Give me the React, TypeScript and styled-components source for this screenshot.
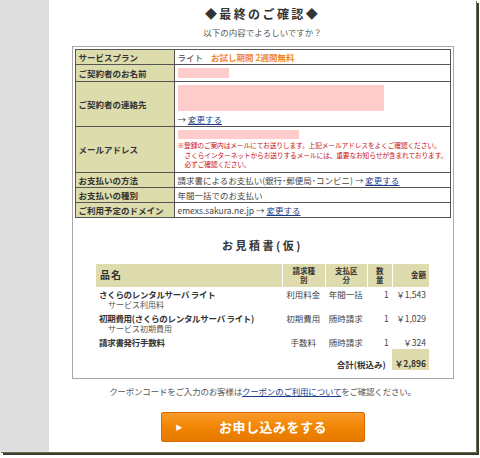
import React from "react";
import styled, { createGlobalStyle } from "styled-components";

const GlobalStyle = createGlobalStyle`
  html, body {
    margin: 0;
    background: #fff;
    font-family: "Noto Sans CJK JP", "Liberation Sans", sans-serif;
  }
`;

const Page = styled.div`
  width: 480px;
  height: 458px;
  background: #fff;
`;

const Frame = styled.div`
  width: 476px;
  height: 452px;
  display: flex;
  box-shadow: 1px 1px 0 #6a6a55, 3px 3px 0 #3a3c2c;
`;

const Gutter = styled.div`
  width: 49px;
  flex-shrink: 0;
  background: #dedede;
`;

const Main = styled.main`
  flex: 1;
  display: flex;
  flex-direction: column;
  align-items: center;
  padding-top: 6px;
  color: #333;
  background: #fff;
`;

const Title = styled.h1`
  margin: 0;
  font-size: 12px;
  line-height: 16px;
  font-weight: bold;
  letter-spacing: 2.4px;
  color: #333;
`;

const Lead = styled.p`
  margin: 4px 0 0;
  font-size: 8.5px;
  line-height: 12px;
  color: #555;
`;

const Box = styled.section`
  margin-top: 8px;
  width: 376px;
  border: 1px solid #a8a8a8;
  padding: 2px 2px 8px;
`;

const ConfirmTable = styled.table`
  width: 100%;
  table-layout: fixed;
  border-collapse: collapse;
  font-size: 8.5px;
  line-height: 12px;
`;

const Label = styled.th`
  background: #dcdcac;
  border: 1px solid #555;
  padding: 1px 3px;
  text-align: left;
  font-weight: bold;
  color: #333;
  white-space: nowrap;
`;

const Value = styled.td`
  border: 1px solid #555;
  padding: 1px 3px;
  color: #444;
  vertical-align: middle;
  overflow: hidden;
`;

const Trial = styled.span`
  margin-left: 8px;
  color: #f0892a;
  font-weight: bold;
`;

const Masked = styled.div<{ $w: number; $h: number }>`
  width: ${(p) => p.$w}px;
  height: ${(p) => p.$h}px;
  background: #ffcccc;
  margin: 2px 0;
`;

const Change = styled.a`
  color: #1d3c8c;
  text-decoration: underline;
  cursor: pointer;
`;

const Note = styled.p`
  margin: 2px 0 1px;
  color: #c8141e;
  font-size: 6.8px;
  line-height: 9.5px;
  white-space: nowrap;
  letter-spacing: -0.2px;
`;

const NoteIndent = styled.span`
  padding-left: 7px;
`;

const EstimateTitle = styled.h2`
  margin: 20px 0 0;
  text-align: center;
  font-size: 11px;
  line-height: 14px;
  font-weight: bold;
  letter-spacing: 2.5px;
  color: #333;
`;

const EstimateTable = styled.table`
  width: 333px;
  margin: 12px auto 0;
  border-collapse: separate;
  border-spacing: 0;
  font-size: 8.5px;
  line-height: 11px;
  color: #444;
`;

const Head = styled.th<{ $align?: string; $w?: number }>`
  background: #dedcae;
  height: 23px;
  padding: 0 3px;
  border-left: 1px solid #fff;
  font-weight: bold;
  font-size: 7.5px;
  line-height: 9.5px;
  color: #333;
  text-align: ${(p) => p.$align || "center"};
  width: ${(p) => (p.$w ? `${p.$w}px` : "auto")};
  &:first-child {
    border-left: none;
    font-size: 10px;
    padding-left: 4px;
    letter-spacing: 1px;
  }
`;

const Cell = styled.td<{ $align?: string }>`
  padding: 2px 3px 1px;
  text-align: ${(p) => p.$align || "left"};
  vertical-align: top;
  white-space: nowrap;
`;

const ItemName = styled.div`
  font-weight: bold;
  color: #333;
  letter-spacing: -0.3px;
`;

const ItemSub = styled.div`
  padding-left: 9px;
  font-size: 8px;
  line-height: 10px;
  color: #555;
`;

const TotalLabel = styled.td`
  padding: 10px 6px 0 0;
  text-align: right;
  font-weight: bold;
  color: #333;
`;

const TotalValue = styled.td`
  padding: 1px 3px;
  text-align: right;
  font-weight: bold;
  background: #dedcae;
  color: #333;
  vertical-align: bottom;
`;

const Coupon = styled.p`
  margin: 6px 0 0;
  font-size: 8.5px;
  line-height: 12px;
  color: #555;
  letter-spacing: -0.2px;
`;

const SubmitButton = styled.button`
  margin-top: 15px;
  width: 204px;
  height: 30px;
  display: flex;
  align-items: center;
  padding: 0 0 0 14px;
  border: 1px solid #d66c00;
  border-radius: 2px;
  background: linear-gradient(#fa9b2c, #f08300 55%, #e67a00);
  color: #fff;
  font-family: inherit;
  font-size: 13px;
  font-weight: bold;
  letter-spacing: 0.5px;
  cursor: pointer;
`;

const Arrow = styled.span`
  font-size: 7px;
  margin-right: 36px;
`;

type Item = {
  name: string;
  sub?: string;
  kind: string;
  pay: string;
  qty: string;
  price: string;
};

const items: Item[] = [
  {
    name: "さくらのレンタルサーバ ライト",
    sub: "サービス利用料",
    kind: "利用料金",
    pay: "年間一括",
    qty: "1",
    price: "￥1,543",
  },
  {
    name: "初期費用(さくらのレンタルサーバ ライト)",
    sub: "サービス初期費用",
    kind: "初期費用",
    pay: "随時請求",
    qty: "1",
    price: "￥1,029",
  },
  {
    name: "請求書発行手数料",
    kind: "手数料",
    pay: "随時請求",
    qty: "1",
    price: "￥324",
  },
];

export default function App() {
  return (
    <>
      <GlobalStyle />
      <Page>
        <Frame>
          <Gutter />
          <Main>
            <Title>◆最終のご確認◆</Title>
            <Lead>以下の内容でよろしいですか？</Lead>
            <Box>
              <ConfirmTable>
                <colgroup>
                  <col style={{ width: 99 }} />
                  <col />
                </colgroup>
                <tbody>
                  <tr>
                    <Label>サービスプラン</Label>
                    <Value>
                      ライト<Trial>お試し期間 2週間無料</Trial>
                    </Value>
                  </tr>
                  <tr>
                    <Label>ご契約者のお名前</Label>
                    <Value>
                      <Masked $w={51} $h={10} />
                    </Value>
                  </tr>
                  <tr>
                    <Label>ご契約者の連絡先</Label>
                    <Value>
                      <Masked $w={206} $h={26} />
                      → <Change>変更する</Change>
                    </Value>
                  </tr>
                  <tr>
                    <Label>メールアドレス</Label>
                    <Value>
                      <Masked $w={121} $h={9} />
                      <Note>
                        ※登録のご案内はメールにてお送りします。上記メールアドレスをよくご確認ください。
                        <br />
                        <NoteIndent>
                          さくらインターネットからお送りするメールには、重要なお知らせが含まれております。
                        </NoteIndent>
                        <br />
                        <NoteIndent>必ずご確認ください。</NoteIndent>
                      </Note>
                    </Value>
                  </tr>
                  <tr>
                    <Label>お支払いの方法</Label>
                    <Value>
                      請求書によるお支払い(銀行･郵便局･コンビニ) → <Change>変更する</Change>
                    </Value>
                  </tr>
                  <tr>
                    <Label>お支払いの種別</Label>
                    <Value>年間一括でのお支払い</Value>
                  </tr>
                  <tr>
                    <Label>ご利用予定のドメイン</Label>
                    <Value>
                      emexs.sakura.ne.jp → <Change>変更する</Change>
                    </Value>
                  </tr>
                </tbody>
              </ConfirmTable>

              <EstimateTitle>お見積書(仮)</EstimateTitle>
              <EstimateTable>
                <thead>
                  <tr>
                    <Head $align="left">品名</Head>
                    <Head $w={36}>
                      請求種
                      <br />別
                    </Head>
                    <Head $w={35}>
                      支払区
                      <br />分
                    </Head>
                    <Head $w={18}>
                      数
                      <br />量
                    </Head>
                    <Head $w={30} $align="right">
                      金額
                    </Head>
                  </tr>
                </thead>
                <tbody>
                  {items.map((it) => (
                    <tr key={it.name}>
                      <Cell>
                        <ItemName>{it.name}</ItemName>
                        {it.sub && <ItemSub>{it.sub}</ItemSub>}
                      </Cell>
                      <Cell $align="center">{it.kind}</Cell>
                      <Cell $align="center">{it.pay}</Cell>
                      <Cell $align="right">{it.qty}</Cell>
                      <Cell $align="right">{it.price}</Cell>
                    </tr>
                  ))}
                  <tr>
                    <TotalLabel colSpan={4}>合計(税込み)</TotalLabel>
                    <TotalValue>￥2,896</TotalValue>
                  </tr>
                </tbody>
              </EstimateTable>
            </Box>
            <Coupon>
              クーポンコードをご入力のお客様は<Change>クーポンのご利用について</Change>をご確認ください。
            </Coupon>
            <SubmitButton type="button">
              <Arrow>▶</Arrow>お申し込みをする
            </SubmitButton>
          </Main>
        </Frame>
      </Page>
    </>
  );
}
